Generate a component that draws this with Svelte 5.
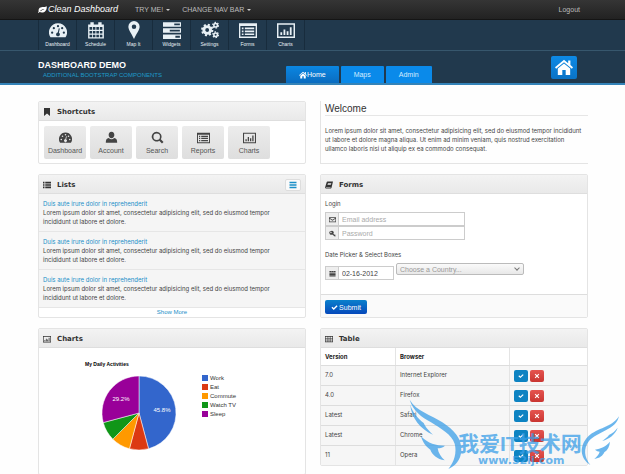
<script lang="ts">
    type Slice = { label: string; hours: number; color: string };

    const tiles = [
        ["gauge", "Dashboard"],
        ["calendar", "Schedule"],
        ["pin", "Map It"],
        ["tasks", "Widgets"],
        ["cogs", "Settings"],
        ["form", "Forms"],
        ["chart", "Charts"],
    ];

    const shortcuts = [
        ["gauge", "Dashboard"],
        ["user", "Account"],
        ["search", "Search"],
        ["form", "Reports"],
        ["chart", "Charts"],
    ];

    const browsers = [
        ["7.0", "Internet Explorer"],
        ["4.0", "Firefox"],
        ["Latest", "Safari"],
        ["Latest", "Chrome"],
        ["11", "Opera"],
    ];

    const slices: Slice[] = [
        { label: "Work", hours: 11, color: "#3366cc" },
        { label: "Eat", hours: 2, color: "#dc3912" },
        { label: "Commute", hours: 2, color: "#ff9900" },
        { label: "Watch TV", hours: 2, color: "#109618" },
        { label: "Sleep", hours: 7, color: "#990099" },
    ];

    const cx = 100;
    const cy = 65;
    const radius = 37;

    function point(hours: number) {
        const a = (hours / 24) * Math.PI * 2;
        return `${cx + radius * Math.sin(a)} ${cy - radius * Math.cos(a)}`;
    }

    function wedge(i: number) {
        const start = slices.slice(0, i).reduce((sum, s) => sum + s.hours, 0);
        return `M${cx} ${cy}L${point(start)}A${radius} ${radius} 0 0 1 ${point(start + slices[i].hours)}Z`;
    }

    function hole(x: number, y: number, r: number) {
        return `M${x - r} ${y}a${r} ${r} 0 1 0 ${2 * r} 0a${r} ${r} 0 1 0 ${-2 * r} 0z`;
    }

    function cells(xs: number[], ys: number[], w: number, h: number) {
        return xs.map((x) => ys.map((y) => `M${x} ${y}h${w}v${h}h${-w}z`).join("")).join("");
    }

    // all on a 16x16 grid, filled even-odd
    const icons: Record<string, string> = {
        gauge:
            "M8 2a8 8 0 0 0-6.7 12.4h13.4A8 8 0 0 0 8 2z" +
            hole(2.8, 10.4, 1) + hole(4.3, 6.4, 1) + hole(8, 4.6, 1) + hole(11.7, 6.4, 1) + hole(13.2, 10.4, 1) +
            "M8.7 6.4l.9.2-.8 3.8a1.7 1.7 0 1 1-1-.2z",
        calendar:
            "M1 3h2V1h3v2h4V1h3v2h2v12.5H1z" + cells([2.2, 5.2, 8.3, 11.4], [5.4, 8.8, 12.2], 2.3, 2.3),
        pin: "M8 0a5 5 0 0 0-5 5c0 3 3.4 7 5 11 1.6-4 5-8 5-11a5 5 0 0 0-5-5z" + hole(8, 5, 2),
        tasks:
            "M0 1h16v4H0zM0 6.5h16v4H0zM0 12h16v4H0zM10 2.2v1.6h5V2.2zM6 7.7v1.6h9V7.7zM11 13.2v1.6h4v-1.6z",
        form:
            "M0 2h16v13H0zM1.2 4.5v9.3h13.6V4.5z" + cells([2.5], [5.8, 8.4, 11], 1.5, 1.5) + cells([5.2], [5.8, 8.4, 11], 8.3, 1.5),
        chart: "M0 2h16v13H0zM1.3 3.3v10.4h13.4V3.3zM3 10h1.6v2.5H3zM5.8 7.5h1.6v5H5.8zM8.6 9h1.6v3.5H8.6zM11.4 5.5H13v7h-1.6z",
        user: "M8 1c-2.4 0-3.5 1.7-3.5 3.8S6 9 8 9s3.5-2.1 3.5-4.2S10.4 1 8 1zM4.7 8.5C2 9 1 10.5 1 14.5h14c0-4-1-5.5-3.7-6-1.8 2-4.8 2-6.6 0z",
        search: "M7 1a6 6 0 1 0 3.2 11l3.3 3.3 1.9-1.9-3.3-3.3A6 6 0 0 0 7 1zM7 3a4 4 0 1 1 0 8 4 4 0 0 1 0-8z",
        bookmark: "M2 0h12v16l-6-5-6 5z",
        list: cells([0], [1.5, 5, 8.5, 12], 3, 2.5) + cells([4.5], [1.5, 5, 8.5, 12], 11.5, 2.5),
        bars: cells([1], [1.5, 6.5, 11.5], 14, 3),
        book: "M5 1h11l-3 12.5c-.2.8-.7 1.5-1.6 1.5H2C.5 15 0 13.5.4 12L3.3 2.5C3.6 1.5 4 1 5 1zM6 4l-.4 1.3h6.6l.4-1.3zM5.3 6.5l-.4 1.3h6.6l.4-1.3zM2 12.3c-.3.7 0 1.2.6 1.2h8.3l.4-1.2z",
        table: "M0 2h16v12.5H0z" + cells([1.2, 4.8, 8.4, 12], [3.4, 7, 10.7], 2.7, 2.5),
        mail: "M0 3h16v11H0zM1.4 6v6.6h13.2V6L8 10.6zM2 4.3l6 4.2 6-4.2z",
        key: "M5 2a4.3 4.3 0 1 0 2.3 8l6 5 2-1-1.2-1.3 1.2-1-2-1.7-1 1-2.5-2.2A4.3 4.3 0 0 0 5 2z" + hole(4.5, 5.8, 1.6),
        grid: "M1 2h14v13H1z" + cells([1], [5.4, 8.4, 11.4], 14, 0.6) + cells([5.2, 9.8], [2], 0.6, 3.4),
        home: "M8 1.5L0 8.3l1 1.2L8 3.7l7 5.8 1-1.2-2.3-2V2.2h-2v2.4zM8 4.8L2.5 9.4V15h4v-4.3h3V15h4V9.4z",
        check: "M1 8.5L3.2 6.3 6.3 9.3 12.8 3 15 5.2 6.3 13.6z",
        cross: "M2 4l2-2 4 4 4-4 2 2-4 4 4 4-2 2-4-4-4 4-2-2 4-4z",
        leaf: "M15.5 2C10 4.5 5 2 2 6c-1.5 2.2-1 4-.6 5L0 13l1.3 1 1.2-1.5c4 1.5 8.5 1 10.7-2C15.3 8 15.8 5 15.5 2zM4 10.2C6 8 8.5 7 11.5 7 9 8 6.5 9.3 5 11z",
    };
</script>

{#snippet icon(name: string)}
    <svg class="icon" viewBox="0 0 16 16" aria-hidden="true">
        {#if name === "cogs"}
            <circle class="teeth" cx="5.5" cy="8" r="4.6" stroke-width="1.8" stroke-dasharray="1.8 1.813" />
            <circle class="ring" cx="5.5" cy="8" r="3" stroke-width="2.6" />
            {#each [3.8, 12.2] as y}
                <circle class="teeth" cx="13" cy={y} r="2.5" stroke-width="1.2" stroke-dasharray="1.3 1.32" />
                <circle class="ring" cx="13" cy={y} r="1.6" stroke-width="1.4" />
            {/each}
        {:else}
            <path fill-rule="evenodd" d={icons[name]} />
        {/if}
    </svg>
{/snippet}

<div class="page">
    <nav class="topbar">
        <a class="brand" href="#home">{@render icon("leaf")}Clean Dashboard</a>
        <a class="drop" href="#try">TRY ME!</a>
        <a class="drop" href="#navbar">CHANGE NAV BAR</a>
        <a class="logout" href="#logout">Logout</a>
    </nav>

    <header>
        <nav class="tiles">
            {#each tiles as [glyph, label]}
                <a href="#{glyph}">{@render icon(glyph)}<span>{label}</span></a>
            {/each}
        </nav>
        <div class="subhead">
            <div class="title">
                <h1>DASHBOARD DEMO</h1>
                <p>ADDITIONAL BOOTSTRAP COMPONENTS</p>
            </div>
            <nav class="tabs">
                <a class="active" href="#home">{@render icon("home")}Home</a>
                <a href="#maps">Maps</a>
                <a href="#admin">Admin</a>
            </nav>
            <button class="home" aria-label="Home">{@render icon("home")}</button>
        </div>
    </header>

    <main>
        <div class="column">
            <section class="panel">
                <h2>{@render icon("bookmark")}Shortcuts</h2>
                <div class="shortcuts">
                    {#each shortcuts as [glyph, label]}
                        <button>{@render icon(glyph)}<span>{label}</span></button>
                    {/each}
                </div>
            </section>

            <section class="panel lists">
                <h2>
                    {@render icon("list")}Lists
                    <button class="menu" aria-label="List options">{@render icon("bars")}</button>
                </h2>
                <ul>
                    {#each [1, 2, 3] as n}
                        <li>
                            <a href="#item-{n}">Duis aute irure dolor in reprehenderit</a>
                            <p>
                                Lorem ipsum dolor sit amet, consectetur adipisicing elit, sed do eiusmod tempor<br />
                                incididunt ut labore et dolore.
                            </p>
                        </li>
                    {/each}
                </ul>
                <a class="more" href="#more">Show More</a>
            </section>

            <section class="panel charts">
                <h2>{@render icon("chart")}Charts</h2>
                <svg class="pie" viewBox="0 0 266 126" role="img" aria-label="My Daily Activities">
                    <text class="heading" x="46" y="18">My Daily Activities</text>
                    {#each slices as slice, i}
                        <path d={wedge(i)} fill={slice.color} />
                        <rect x="163" y={27 + i * 9} width="6" height="6" fill={slice.color} />
                        <text x="171" y={32 + i * 9}>{slice.label}</text>
                    {/each}
                    <text class="share" x="123" y="64">45.8%</text>
                    <text class="share" x="82" y="53">29.2%</text>
                </svg>
            </section>
        </div>

        <div class="column">
            <section class="welcome">
                <h3>Welcome</h3>
                <p>
                    Lorem ipsum dolor sit amet, consectetur adipisicing elit, sed do eiusmod tempor incididunt<br />
                    ut labore et dolore magna aliqua. Ut enim ad minim veniam, quis nostrud exercitation<br />
                    ullamco laboris nisi ut aliquip ex ea commodo consequat.
                </p>
            </section>

            <section class="panel forms">
                <h2>{@render icon("book")}Forms</h2>
                <form>
                    <div class="fields">
                        <label for="email">Login</label>
                        <div class="group">
                            <span>{@render icon("mail")}</span>
                            <input id="email" type="email" placeholder="Email address" />
                        </div>
                        <div class="group">
                            <span>{@render icon("key")}</span>
                            <input type="password" placeholder="Password" aria-label="Password" />
                        </div>
                        <label class="second" for="date">Date Picker &amp; Select Boxes</label>
                        <div class="row">
                            <div class="group date">
                                <span>{@render icon("grid")}</span>
                                <input id="date" type="text" value="02-16-2012" />
                            </div>
                            <div class="select">
                                <select aria-label="Country">
                                    <option>Choose a Country...</option>
                                </select>
                            </div>
                        </div>
                    </div>
                    <div class="actions">
                        <button type="button">{@render icon("check")}Submit</button>
                    </div>
                </form>
            </section>

            <section class="panel">
                <h2>{@render icon("table")}Table</h2>
                <table>
                    <thead>
                        <tr><th>Version</th><th>Browser</th><th></th></tr>
                    </thead>
                    <tbody>
                        {#each browsers as [version, name]}
                            <tr>
                                <td>{version}</td>
                                <td>{name}</td>
                                <td>
                                    <div class="buttons">
                                        <button aria-label="Accept {name}">{@render icon("check")}</button>
                                        <button class="danger" aria-label="Remove {name}">{@render icon("cross")}</button>
                                    </div>
                                </td>
                            </tr>
                        {/each}
                    </tbody>
                </table>
            </section>
        </div>
    </main>

    <svg class="watermark" viewBox="0 0 220 80" width="220" height="80">
        <g transform="scale(0.3333)">
            <path d="M14 14C34 50 78 58 112 82C148 106 170 130 169 166C168 196 150 214 130 222C148 200 156 172 149 146C140 118 106 100 78 82C50 66 24 48 14 14z" />
            <path d="M16 30C18 66 46 104 84 119C68 104 62 96 56 84C38 70 24 54 16 30z" />
            <path d="M48 124C70 146 92 152 120 152C114 158 106 160 98 160C100 174 108 186 119 196C96 192 82 180 76 164C64 156 54 144 48 124z" />
            <path d="M642 64C620 98 578 98 550 124C522 152 524 190 556 210C538 186 534 162 552 138C578 110 634 104 642 64z" />
            <path d="M638 98C632 118 612 132 592 138C602 130 608 126 612 120C624 114 630 108 638 98z" />
            <path d="M615 140C602 156 588 160 570 164C574 168 580 170 584 170C582 178 576 184 568 192C584 190 594 182 598 172C608 166 614 154 615 140z" />
        </g>
        <text class="name" x="53" y="56">我爱IT技术网</text>
        <text class="url" x="73" y="69">www.52ij.com</text>
    </svg>
</div>

<style>
    :global(body) {
        margin: 0;
        background: #fefefe;
    }

    .page {
        position: relative;
        display: flex;
        flex-direction: column;
        min-height: 100vh;
        font: 7px/9px "Liberation Sans", Arial, sans-serif;
        color: #444;
    }

    h1, h2, h3, p, ul {
        margin: 0;
        padding: 0;
        list-style: none;
    }

    a {
        color: #1a8fc8;
        text-decoration: none;
    }

    button, input, select {
        margin: 0;
        padding: 0;
        box-sizing: border-box;
        border: 0;
        font: inherit;
        color: inherit;
    }

    .icon {
        width: 8px;
        height: 8px;
        flex: none;
        fill: currentColor;
    }

    .teeth, .ring {
        fill: none;
        stroke: currentColor;
    }

    .topbar {
        display: flex;
        align-items: center;
        height: 19px;
        padding: 0 45px 0 38px;
        border-bottom: 1px solid #151515;
        background: linear-gradient(#353535, #222);
    }

    .topbar a {
        color: #bbb;
    }

    .topbar .brand {
        display: flex;
        align-items: center;
        gap: 1px;
        width: 97px;
        font-size: 9px;
        font-style: italic;
        color: #fff;
    }

    .brand .icon {
        width: 9px;
        height: 9px;
    }

    .drop {
        display: flex;
        align-items: center;
        gap: 3px;
        margin-right: 12px;
    }

    .drop::after {
        content: "";
        border: 2px solid transparent;
        border-top-color: #ccc;
        border-bottom: 0;
    }

    .topbar .logout {
        margin-left: auto;
    }

    header {
        background: #21394d;
        border-bottom: 2px solid #3483b8;
    }

    .tiles {
        display: flex;
        height: 30px;
        padding-left: 38px;
        border-bottom: 1px solid #37576d;
    }

    .tiles a {
        display: flex;
        flex-direction: column;
        align-items: center;
        gap: 2px;
        width: 37px;
        padding-top: 1px;
        border-right: 1px solid #182c3d;
        font-size: 5px;
        line-height: 7px;
        color: #e8f0f5;
    }

    .tiles a:first-child {
        border-left: 1px solid #182c3d;
    }

    .tiles .icon {
        width: 18px;
        height: 18px;
    }

    .subhead {
        display: grid;
        grid-template-columns: 46% 1fr auto;
        height: 32px;
        padding: 0 48px 0 38px;
    }

    .title {
        padding-top: 9px;
    }

    h1 {
        font-size: 9px;
        line-height: 11px;
        color: #fff;
    }

    .title p {
        padding-left: 5px;
        font-size: 6px;
        color: #1f9bc9;
    }

    .tabs {
        display: flex;
        align-items: flex-end;
        gap: 2px;
    }

    .tabs a {
        display: flex;
        align-items: center;
        height: 17px;
        padding: 0 13px;
        border-radius: 1px 1px 0 0;
        background: #0a8aea;
        color: #d5ecff;
    }

    .tabs .active {
        background: linear-gradient(#0b87e2, #0a6cc0);
        color: #fff;
    }

    .home {
        align-self: center;
        display: grid;
        place-items: center;
        width: 26px;
        height: 23px;
        border-radius: 2px;
        background: linear-gradient(#0d8ae6, #0a73c6);
        color: #fff;
    }

    .home .icon {
        width: 18px;
        height: 18px;
    }

    main {
        flex: 1;
        display: grid;
        grid-template-columns: 1fr 1fr;
        gap: 14px;
        padding: 16px 37px 0 38px;
    }

    .column {
        display: flex;
        flex-direction: column;
        gap: 10px;
        min-width: 0;
    }

    .panel {
        border: 1px solid #e4e4e4;
        border-radius: 2px;
        background: #fff;
    }

    h2 {
        display: flex;
        align-items: center;
        gap: 6px;
        height: 16px;
        padding: 2px 4px 0;
        border-bottom: 1px solid #dedede;
        background: linear-gradient(#f3f3f3, #e9e9e9);
        font: bold 7px/9px "DejaVu Sans", Verdana, sans-serif;
        color: #333;
    }

    .shortcuts {
        display: flex;
        gap: 4px;
        padding: 5px 5px 4px;
    }

    .shortcuts button {
        display: flex;
        flex-direction: column;
        align-items: center;
        gap: 2px;
        width: 42px;
        height: 33px;
        padding-top: 5px;
        border-radius: 2px;
        background: linear-gradient(#ececec, #dedede);
        color: #555;
    }

    .shortcuts .icon {
        width: 13px;
        height: 13px;
        color: #444;
    }

    .menu {
        display: grid;
        place-items: center;
        width: 16px;
        height: 12px;
        margin-left: auto;
        border: 1px solid #ddd;
        border-radius: 2px;
        background: #fafafa;
        color: #1a8fc8;
    }

    .lists li, .welcome p, label, table {
        font-family: Inter, "Liberation Sans", sans-serif;
        font-size: 6px;
    }

    .lists p, .welcome p {
        white-space: nowrap;
    }

    .lists ul {
        background: #f5f5f5;
    }

    .lists li {
        padding: 5px 4px;
        border-bottom: 1px solid #e6e6e6;
    }

    .lists li a {
        display: block;
    }

    .more {
        display: block;
        font-size: 6px;
        text-align: center;
    }

    .charts {
        flex: 1;
    }

    .pie {
        display: block;
        width: 100%;
    }

    .pie path {
        stroke: #fff;
        stroke-width: 0.5;
    }

    .pie text {
        font-size: 6px;
        fill: #333;
    }

    .pie .heading {
        font-size: 5px;
        font-weight: bold;
        fill: #000;
    }

    .pie .share {
        text-anchor: middle;
        fill: #fff;
    }

    .welcome {
        box-sizing: border-box;
        height: 63px;
        padding-left: 4px;
        border-left: 1px solid #e4e4e4;
        border-bottom: 1px solid #e4e4e4;
    }

    h3 {
        margin-bottom: 10px;
        padding: 2px 0 0;
        border-bottom: 1px solid #e6e6e6;
        font-size: 10px;
        font-weight: normal;
        line-height: 12px;
        color: #333;
    }

    .fields {
        height: 95px;
        padding: 5px 4px 0;
    }

    label {
        display: block;
        margin-bottom: 4px;
    }

    .second {
        margin: 10px 0 4px;
    }

    .group {
        display: flex;
        width: 140px;
        height: 14px;
    }

    .group span {
        box-sizing: border-box;
        display: grid;
        place-items: center;
        width: 13px;
        border: 1px solid #ccc;
        border-right: 0;
        background: #eee;
    }

    .group .icon {
        width: 7px;
        height: 7px;
    }

    .group input {
        flex: 1;
        min-width: 0;
        padding: 0 3px;
        border: 1px solid #ccc;
        background: #fff;
    }

    .group input::placeholder {
        color: #aaa;
    }

    .group.date {
        width: 69px;
        margin-top: 3px;
    }

    .row {
        display: flex;
        gap: 2px;
    }

    .select {
        display: grid;
        width: 128px;
        height: 12px;
    }

    .select select, .select::after {
        grid-area: 1 / 1;
    }

    .select::after {
        content: "";
        align-self: center;
        justify-self: end;
        width: 3px;
        height: 3px;
        margin: 0 5px 2px 0;
        border: solid #777;
        border-width: 0 1px 1px 0;
        transform: rotate(45deg);
        pointer-events: none;
    }

    select {
        appearance: none;
        padding: 0 3px;
        border: 1px solid #bbb;
        border-radius: 2px;
        background: linear-gradient(#fafafa, #e8e8e8);
        color: #999;
    }

    .actions {
        padding: 5px 4px 3px;
        border-top: 1px solid #ddd;
        background: #fafafa;
    }

    .actions button {
        display: flex;
        align-items: center;
        justify-content: center;
        gap: 1px;
        width: 42px;
        height: 14px;
        border-radius: 2px;
        background: linear-gradient(#0a80cc, #0548bb);
        color: #fff;
    }

    .actions .icon {
        width: 7px;
        height: 7px;
    }

    table {
        width: 100%;
        border-collapse: collapse;
        table-layout: fixed;
    }

    th, td {
        box-sizing: border-box;
        height: 20px;
        padding: 4px 4px 0;
        border-bottom: 1px solid #ddd;
        border-right: 1px solid #e4e4e4;
        text-align: left;
        vertical-align: top;
    }

    th {
        height: 17px;
        width: 43%;
        color: #222;
    }

    th:first-child {
        width: 28%;
    }

    th:last-child {
        width: 29%;
    }

    th:last-child, td:last-child {
        border-right: 0;
    }

    tbody {
        background: #f6f6f6;
    }

    tbody tr:last-child td {
        border-bottom: 0;
    }

    .buttons {
        display: flex;
        gap: 2px;
    }

    .buttons button {
        display: grid;
        place-items: center;
        width: 14px;
        height: 12px;
        border-radius: 2px;
        background: #0d83c2;
        color: #fff;
    }

    .buttons .danger {
        background: linear-gradient(#e5534f, #c93632);
    }

    .buttons .icon {
        width: 6px;
        height: 6px;
    }

    .watermark {
        position: absolute;
        right: 0;
        bottom: 0;
        fill: #3b9fe8;
        opacity: 0.75;
        pointer-events: none;
    }

    .name {
        font: bold 21px "Liberation Sans", "Noto Sans CJK SC", sans-serif;
    }

    .url {
        font: bold 11px "DejaVu Sans", Verdana, sans-serif;
    }
</style>
